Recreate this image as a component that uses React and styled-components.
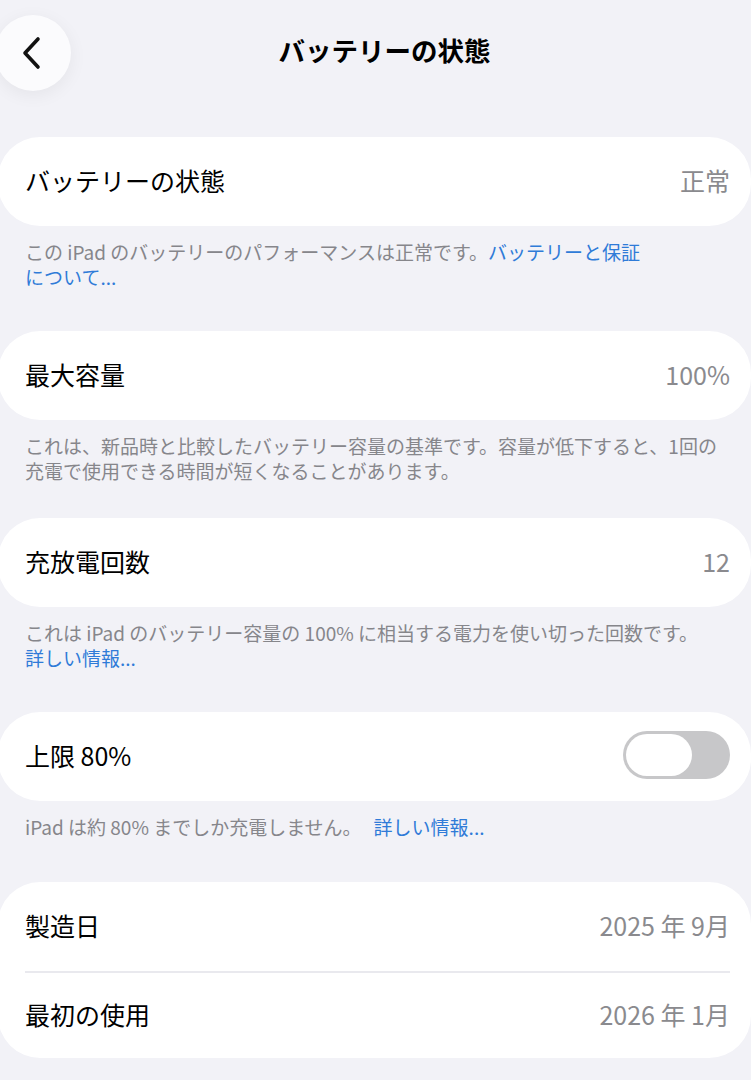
import React from "react";
import styled, { createGlobalStyle } from "styled-components";

const GlobalStyle = createGlobalStyle`
  html, body {
    margin: 0;
    padding: 0;
    background: #f2f2f7;
  }
  body {
    font-family: "Noto Sans CJK JP", "Noto Sans", "Liberation Sans", sans-serif;
    color: #000;
    -webkit-font-smoothing: antialiased;
  }
`;

const Page = styled.div`
  width: 751px;
  min-height: 1080px;
  background: #f2f2f7;
  overflow: hidden;
`;

const Header = styled.header`
  position: relative;
  height: 105px;
  display: flex;
  align-items: center;
  justify-content: center;
  padding-bottom: 6px;
  box-sizing: border-box;
`;

const BackButton = styled.button`
  position: absolute;
  left: -5px;
  top: 15px;
  width: 76px;
  height: 76px;
  border-radius: 50%;
  border: none;
  background: #fbfbfd;
  box-shadow: 0 4px 18px rgba(0, 0, 0, 0.06);
  display: flex;
  align-items: center;
  justify-content: center;
  padding: 0 2px 0 0;
`;

const Title = styled.h1`
  margin: 0 0 0 18px;
  font-size: 26.5px;
  font-weight: 700;
`;

const Content = styled.main`
  display: flex;
  flex-direction: column;
  padding-top: 32px;
`;

const Card = styled.section`
  background: #fff;
  border-radius: 42px;
  margin: 0 0 0 -2px;
  display: flex;
  flex-direction: column;
`;

const Row = styled.div`
  height: 89px;
  display: flex;
  align-items: center;
  justify-content: space-between;
  padding: 0 21px 3px 27px;
  box-sizing: border-box;

  & + & {
    height: 87px;
    border-top: 2px solid #e9e9ee;
    margin-left: 27px;
    margin-right: 21px;
    padding-left: 0;
    padding-right: 0;
  }
`;

const Label = styled.span`
  font-size: 25px;
`;

const Value = styled.span`
  font-size: 25px;
  color: #8a8a8e;
`;

const Footer = styled.p`
  margin: 0;
  padding: 13px 20px 0 25px;
  height: ${(p) => p.$h}px;
  box-sizing: border-box;
  font-size: 19px;
  line-height: 25px;
  color: #86868b;
`;

const Link = styled.a`
  color: #2f7bd8;
  text-decoration: none;
  margin-left: ${(p) => (p.$gap ? "12px" : "0")};
`;

const Toggle = styled.div`
  width: 107px;
  height: 48px;
  border-radius: 24px;
  background: #c7c7c9;
  padding: 3px;
  box-sizing: border-box;
  display: flex;
  align-items: center;
`;

const Knob = styled.div`
  width: 66px;
  height: 42px;
  border-radius: 21px;
  background: #fff;
`;

function Chevron() {
  return (
    <svg width="22" height="34" viewBox="0 0 22 34" fill="none">
      <path
        d="M17 3 L4 17 L17 31"
        stroke="#111"
        strokeWidth="3.6"
        strokeLinecap="round"
        strokeLinejoin="round"
      />
    </svg>
  );
}

export default function App() {
  return (
    <Page>
      <GlobalStyle />
      <Header>
        <BackButton aria-label="戻る">
          <Chevron />
        </BackButton>
        <Title>バッテリーの状態</Title>
      </Header>
      <Content>
        <Card>
          <Row>
            <Label>バッテリーの状態</Label>
            <Value>正常</Value>
          </Row>
        </Card>
        <Footer $h={105}>
          この iPad のバッテリーのパフォーマンスは正常です。
          <Link href="#">バッテリーと保証</Link>
          <br />
          <Link href="#">について...</Link>
        </Footer>

        <Card>
          <Row>
            <Label>最大容量</Label>
            <Value>100%</Value>
          </Row>
        </Card>
        <Footer $h={98}>
          これは、新品時と比較したバッテリー容量の基準です。容量が低下すると、1回の
          <br />
          充電で使用できる時間が短くなることがあります。
        </Footer>

        <Card>
          <Row>
            <Label>充放電回数</Label>
            <Value>12</Value>
          </Row>
        </Card>
        <Footer $h={105}>
          これは iPad のバッテリー容量の 100% に相当する電力を使い切った回数です。
          <br />
          <Link href="#">詳しい情報...</Link>
        </Footer>

        <Card>
          <Row>
            <Label>上限 80%</Label>
            <Toggle>
              <Knob />
            </Toggle>
          </Row>
        </Card>
        <Footer $h={81}>
          iPad は約 80% までしか充電しません。
          <Link href="#" $gap>
            詳しい情報...
          </Link>
        </Footer>

        <Card>
          <Row>
            <Label>製造日</Label>
            <Value>2025 年 9月</Value>
          </Row>
          <Row>
            <Label>最初の使用</Label>
            <Value>2026 年 1月</Value>
          </Row>
        </Card>
      </Content>
    </Page>
  );
}
